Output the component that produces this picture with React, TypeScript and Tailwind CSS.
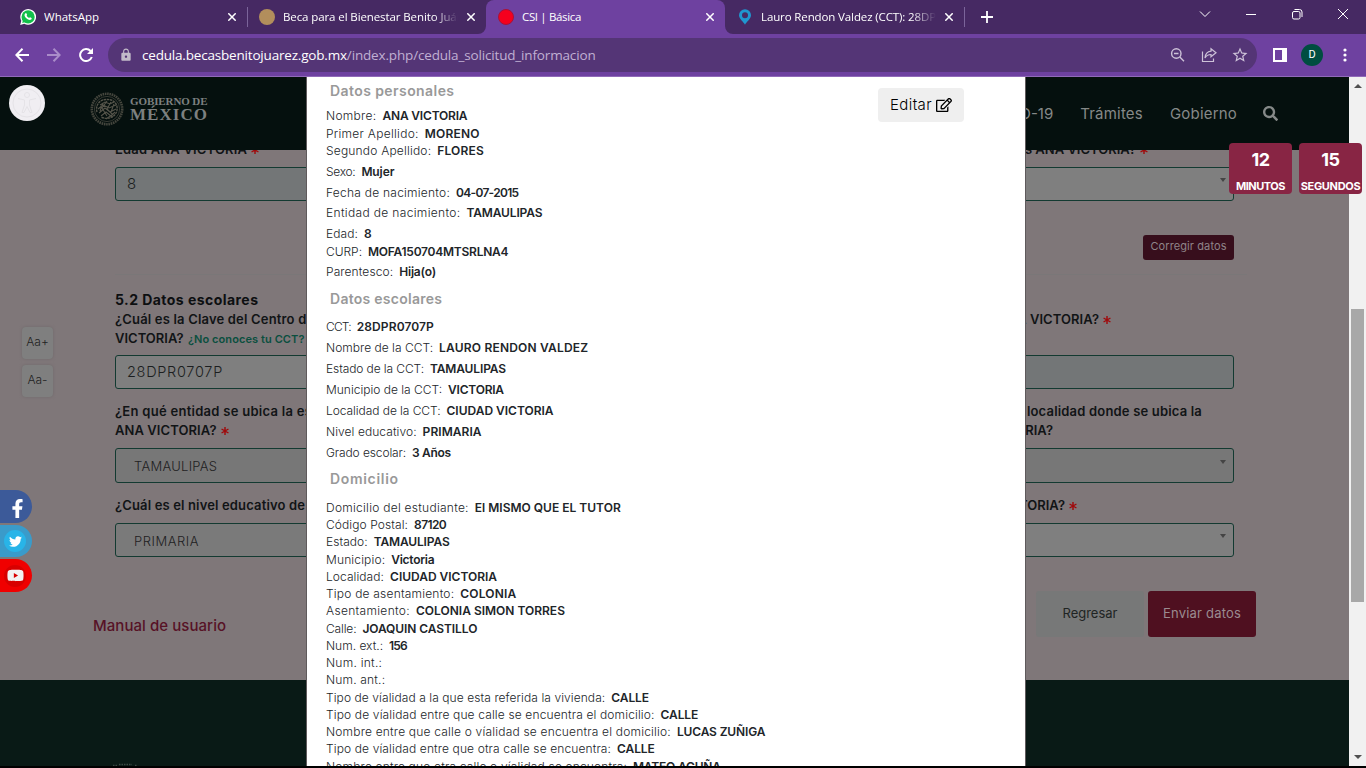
import type { ReactNode } from "react";
import { FaRegEdit, FaSearch, FaFacebookF, FaTwitter, FaYoutube } from "react-icons/fa";
import { MdLock, MdStarOutline } from "react-icons/md";

type Row = { label: string; lt: string; value?: string; vt?: string; mt?: string };

const personales: Row[] = [
  { label: "Nombre:", lt: "tracking-[0.3px]", value: "ANA VICTORIA", vt: "tracking-[-0.19px]" },
  { label: "Primer Apellido:", lt: "tracking-[0.28px]", value: "MORENO", vt: "tracking-[0.2px]", mt: "mt-[0.5px]" },
  { label: "Segundo Apellido:", lt: "tracking-[0.19px]", value: "FLORES", vt: "tracking-[0.18px]" },
  { label: "Sexo:", lt: "tracking-[-0.3px]", value: "Mujer", vt: "tracking-[-0.1px]", mt: "mt-1" },
  { label: "Fecha de nacimiento:", lt: "tracking-[0.24px]", value: "04-07-2015", vt: "tracking-[-0.71px]", mt: "mt-1" },
  { label: "Entidad de nacimiento:", lt: "tracking-[0.34px]", value: "TAMAULIPAS", vt: "tracking-[-0.14px]", mt: "mt-[3px]" },
  { label: "Edad:", lt: "tracking-[0.1px]", value: "8", mt: "mt-1" },
  { label: "CURP:", lt: "tracking-[-0.02px]", value: "MOFA150704MTSRLNA4", vt: "tracking-[-0.24px]", mt: "mt-px" },
  { label: "Parentesco:", lt: "tracking-[0.1px]", value: "Hija(o)", vt: "tracking-[-0.19px]", mt: "mt-[3px]" },
];

const escolares: Row[] = [
  { label: "CCT:", lt: "tracking-[-0.84px]", value: "28DPR0707P", vt: "tracking-[0.1px]" },
  { label: "Nombre de la CCT:", lt: "tracking-[0.02px]", value: "LAURO RENDON VALDEZ", vt: "tracking-[0.19px]" },
  { label: "Estado de la CCT:", lt: "tracking-[-0.1px]", value: "TAMAULIPAS", vt: "tracking-[-0.14px]" },
  { label: "Municipio de la CCT:", lt: "tracking-[0px]", value: "VICTORIA", vt: "tracking-[-0.22px]" },
  { label: "Localidad de la CCT:", lt: "tracking-[-0.06px]", value: "CIUDAD VICTORIA", vt: "tracking-[-0.01px]" },
  { label: "Nivel educativo:", lt: "tracking-[0.07px]", value: "PRIMARIA", vt: "tracking-[0.06px]" },
  { label: "Grado escolar:", lt: "tracking-[-0.11px]", value: "3 Años", vt: "tracking-[-0.33px]" },
];

const domicilio: Row[] = [
  { label: "Domicilio del estudiante:", lt: "tracking-[0.26px]", value: "El MISMO QUE EL TUTOR", vt: "tracking-[0.01px]" },
  { label: "Código Postal:", lt: "tracking-[0.09px]", value: "87120", vt: "tracking-[-0.6px]" },
  { label: "Estado:", lt: "tracking-[0.05px]", value: "TAMAULIPAS", vt: "tracking-[-0.14px]" },
  { label: "Municipio:", lt: "tracking-[0.14px]", value: "Victoria", vt: "tracking-[-0.25px]" },
  { label: "Localidad:", lt: "tracking-[0.07px]", value: "CIUDAD VICTORIA", vt: "tracking-[-0.01px]" },
  { label: "Tipo de asentamiento:", lt: "tracking-[0.2px]", value: "COLONIA", vt: "tracking-[0.18px]" },
  { label: "Asentamiento:", lt: "tracking-[0.32px]", value: "COLONIA SIMON TORRES", vt: "tracking-[0px]" },
  { label: "Calle:", lt: "tracking-[-0.15px]", value: "JOAQUIN CASTILLO", vt: "tracking-[-0.08px]" },
  { label: "Num. ext.:", lt: "tracking-[0px]", value: "156", vt: "tracking-[-0.8px]" },
  { label: "Num. int.:", lt: "tracking-[0.26px]" },
  { label: "Num. ant.:", lt: "tracking-[0.18px]" },
  { label: "Tipo de víalidad a la que esta referida la vivienda:", lt: "tracking-[0.08px]", value: "CALLE", vt: "tracking-[-0.1px]" },
  { label: "Tipo de víalidad entre que calle se encuentra el domicilio:", lt: "tracking-[0.14px]", value: "CALLE", vt: "tracking-[-0.1px]" },
  { label: "Nombre entre que calle o víalidad se encuentra el domicilio:", lt: "tracking-[0.19px]", value: "LUCAS ZUÑIGA", vt: "tracking-[-0.14px]" },
  { label: "Tipo de víalidad entre que otra calle se encuentra:", lt: "tracking-[0.12px]", value: "CALLE", vt: "tracking-[-0.1px]" },
  { label: "Nombre entre que otra calle o víalidad se encuentra:", lt: "tracking-[0.17px]", value: "MATEO ACUÑA", vt: "tracking-[-0.2px]" },
];

function Rows({ rows, gap, leading }: { rows: Row[]; gap?: string; leading: string }) {
  return (
    <dl className={`flex flex-col text-[12px] whitespace-nowrap ${gap ?? ""}`}>
      {rows.map((r, i) => (
        <div key={i} className={`flex gap-1.5 ${leading} ${r.mt ?? ""}`}>
          <dt className={`font-light text-[#212529] ${r.lt}`}>{r.label}</dt>
          {r.value && <dd className={`font-semibold text-[#212529] ${r.vt ?? ""}`}>{r.value}</dd>}
        </div>
      ))}
    </dl>
  );
}

function SectionTitle({ children, className }: { children: ReactNode; className: string }) {
  return <h3 className={`pl-1 text-[14px] leading-[17px] font-semibold text-[#999] ${className}`}>{children}</h3>;
}

function CloseIcon({ className = "" }: { className?: string }) {
  return (
    <svg viewBox="0 0 8 8" className={`size-2 shrink-0 ${className}`} stroke="currentColor" strokeWidth="1.5">
      <path d="M0.3 0.3 7.7 7.7M7.7 0.3 0.3 7.7" />
    </svg>
  );
}

function Tab({ icon, title, tracking, active, fade }: { icon: ReactNode; title: string; tracking: string; active?: boolean; fade?: boolean }) {
  return (
    <div className={`relative flex h-[34px] w-[239px] shrink-0 items-center pr-[11px] pl-3 text-white ${active ? "rounded-t-lg bg-[#6e41a0]" : ""}`}>
      {active && (
        <>
          <svg viewBox="0 0 8 8" className="absolute bottom-0 -left-2 size-2" fill="#6e41a0"><path d="M8 0V8H0A8 8 0 0 0 8 0" /></svg>
          <svg viewBox="0 0 8 8" className="absolute -right-2 bottom-0 size-2" fill="#6e41a0"><path d="M0 0V8H8A8 8 0 0 1 0 0" /></svg>
        </>
      )}
      <span className="mr-2 flex size-4 shrink-0 items-center justify-center">{icon}</span>
      <span className={`w-[175px] overflow-hidden text-[11.5px] whitespace-nowrap ${tracking} ${fade ? "[mask-image:linear-gradient(to_right,black_86%,transparent_100%)]" : ""}`}>{title}</span>
      <CloseIcon className="ml-auto" />
    </div>
  );
}

function BrowserBar() {
  return (
    <div className="font-['Open_Sans',sans-serif]">
      <div className="flex h-[34px] items-center bg-[#462963] text-white">
        <div className="flex w-[247px] shrink-0 pl-2">
          <Tab
            title="WhatsApp"
            tracking="tracking-[0.02px]"
            icon={
              <svg viewBox="0 0 16 16" className="size-4">
                <path d="M0.2 15.9 1.3 11.8A7.9 7.9 0 1 1 4.3 14.8Z" fill="#fff" />
                <circle cx="8.1" cy="7.9" r="6.6" fill="#12c04b" />
                <path d="M2.2 13.9 3.2 10.3 5.6 13Z" fill="#12c04b" />
                <path d="M5.6 4.2c.5-.2.8 0 1 .5l.5 1.1c.1.4-.4.8-.5 1 .5 1 1.3 1.7 2.5 2.2.4-.3.7-.9 1-.8l1.4.7c.4.3.1 1.3-.4 1.7-.8.6-1.9.5-3-.1C6.5 9.7 5.4 8.6 4.8 7.3 4.3 6.1 4.6 4.7 5.6 4.2Z" fill="#fff" />
              </svg>
            }
          />
        </div>
        <span className="h-5 w-px bg-[#7b649a]" />
        <div className="-ml-px flex">
          <Tab title="Beca para el Bienestar Benito Juárez" tracking="tracking-[-0.1px]" fade icon={<span className="size-4 rounded-full bg-[#b28e5c]" />} />
          <Tab title="CSI | Básica" tracking="tracking-[-0.35px]" active icon={<span className="size-4 rounded-full border border-[#a8123a] bg-[#f5001d]" />} />
          <Tab
            title="Lauro Rendon Valdez (CCT): 28DPR"
            tracking="tracking-[-0.12px]"
            fade
            icon={
              <svg viewBox="0 0 16 16" className="size-4">
                <path fillRule="evenodd" d="M8 0.3A6 6 0 0 1 14 6.3C14 10 9.6 12.5 8 15.8 6.4 12.5 2 10 2 6.3A6 6 0 0 1 8 0.3ZM8 3.3A3 3 0 1 0 8 9.3 3 3 0 0 0 8 3.3Z" fill="#2096cf" />
              </svg>
            }
          />
        </div>
        <span className="h-5 w-px bg-[#7b649a]" />
        <svg viewBox="0 0 12 12" className="ml-4 size-3" stroke="#fff" strokeWidth="1.8"><path d="M6 0V12M0 6H12" /></svg>
        <div className="mr-[17px] mb-1.5 ml-auto flex items-center gap-[34px]">
          <svg viewBox="0 0 12 12" className="size-3" fill="none" stroke="#fff"><path d="M1 3.5 6 8.5 11 3.5" /></svg>
          <svg viewBox="0 0 12 12" className="size-3" stroke="#fff"><path d="M1 6.5H11" /></svg>
          <svg viewBox="0 0 12 12" className="size-3" fill="none" stroke="#fff">
            <rect x="1.5" y="3.5" width="7.5" height="7.5" rx="1.5" />
            <path d="M3.5 1.5H8.5A2.5 2.5 0 0 1 11 4V9" />
          </svg>
          <svg viewBox="0 0 12 12" className="size-3" stroke="#fff"><path d="M1 1 11 11M11 1 1 11" /></svg>
        </div>
      </div>
      <div className="flex h-[42px] items-center bg-[#6e41a0] pl-[15px]">
        <svg viewBox="0 0 14 14" className="size-3.5" fill="none" stroke="#fff" strokeWidth="2"><path d="M14 7H1.5M7.5 0.8 1.3 7 7.5 13.2" /></svg>
        <svg viewBox="0 0 14 14" className="ml-[18px] size-3.5" fill="none" stroke="#aa8cc9" strokeWidth="2"><path d="M0 7H12.5M6.5 0.8 12.7 7 6.5 13.2" /></svg>
        <svg viewBox="0 0 14 14" className="ml-[18px] size-3.5">
          <path d="M12.8 9A6 6 0 1 1 11.6 3" fill="none" stroke="#fff" strokeWidth="2" />
          <path d="M14 0V6H8Z" fill="#fff" />
        </svg>
        <div className="ml-[15px] flex h-[34px] w-[1149px] items-center rounded-full bg-[#543576] pl-[11px]">
          <MdLock className="size-[14px] text-[#c2bbc9]" />
          <div className="ml-[9px] text-[13.5px] whitespace-nowrap">
            <span className="tracking-[-0.19px] text-white">cedula.becasbenitojuarez.gob.mx</span>
            <span className="tracking-[-0.16px] text-[#c0b0d3]">/index.php/cedula_solicitud_informacion</span>
          </div>
          <div className="mr-2 ml-auto flex items-center gap-4 text-[#cdc2d8]">
            <svg viewBox="0 0 16 16" className="-mr-px size-4" fill="none" stroke="currentColor" strokeWidth="1.4">
              <circle cx="6.3" cy="6.5" r="4.7" />
              <path d="M4 6.5H8.5M9.8 10 14 14.2" />
            </svg>
            <svg viewBox="0 0 16 16" className="size-4" fill="none" stroke="currentColor" strokeWidth="1.2">
              <path d="M1.5 4.5V14.5H12.5V11.5" />
              <path d="M10 1.8 15 5.8 10 9.8V7.5C7 7.5 5.3 8.6 4 11 4.3 7.5 6 4.6 10 4.2Z" />
            </svg>
            <MdStarOutline className="-ml-0.5 size-[18px]" />
          </div>
        </div>
        <svg viewBox="0 0 14 14" className="ml-4 size-3.5"><path fillRule="evenodd" d="M0 0H14V14H0ZM2 2V12H9V2Z" fill="#fff" /></svg>
        <span className="ml-3.5 flex size-[22px] items-center justify-center rounded-full bg-[#004d40] font-[Roboto] text-[11px] text-white">D</span>
        <svg viewBox="0 0 4 14" className="ml-5 h-3.5 w-1" fill="#fff"><circle cx="2" cy="2" r="1.6" /><circle cx="2" cy="7" r="1.6" /><circle cx="2" cy="12" r="1.6" /></svg>
      </div>
      <div className="h-px bg-[#906ab8]" />
    </div>
  );
}

function Star() {
  return (
    <svg viewBox="0 0 10 10" className="ml-1 inline-block size-2" stroke="#a00a0c" strokeWidth="1.8"><path d="M5 0V10M0.7 2.5 9.3 7.5M9.3 2.5 0.7 7.5" /></svg>
  );
}

function Field({ children, arrow, className = "" }: { children?: ReactNode; arrow?: boolean; className?: string }) {
  return (
    <div className={`flex w-[360px] items-center rounded-[3px] border border-[#133a31] whitespace-nowrap ${className}`}>
      {children}
      {arrow && <svg viewBox="0 0 6 4" className="mr-[7px] mb-2 ml-auto h-1 w-1.5" fill="#444"><path d="M0 0H6L3 4Z" /></svg>}
    </div>
  );
}

function Label({ children, className = "" }: { children: ReactNode; className?: string }) {
  return <p className={`text-[13px] leading-[19px] font-semibold whitespace-nowrap text-[#111416] ${className}`}>{children}</p>;
}

function Emblem() {
  return (
    <svg viewBox="0 0 34 34" className="size-[34px]" fill="none" stroke="#55544a">
      <circle cx="17" cy="17" r="15.2" strokeWidth="2.6" strokeDasharray="1.6 0.7" opacity="0.8" />
      <circle cx="17" cy="17" r="12.6" strokeWidth="0.6" />
      <path d="M7 20C5 13 10 7 17 7.5 24 7 29 13 26.5 20 24 26 17 28 11 25" strokeWidth="1.4" strokeDasharray="2.5 0.6" />
      <path d="M10 13 15 10 20 12 24 10M8 17 13 13 19 16 26 13M9 21 15 16 20 20 26 17M11 24 16 20 21 24 25 20M16 27 20 24 23 25M17 9 12 16 17 24M21 10 17 17 23 23M13 11 10 19M24 12 21 20" strokeWidth="1.1" />
    </svg>
  );
}

function PageBehind() {
  return (
    <div className="flex h-full w-[1349px] flex-col bg-[#7f7779]">
      <header className="flex h-[73px] shrink-0 items-center bg-[#05100e] pl-[90px]">
        <div className="mb-[9px] flex items-center gap-1.5">
          <Emblem />
          <div className="font-['Liberation_Serif',serif] font-bold text-[#7d8080]">
            <div className="text-[11px] leading-[12px] tracking-[-0.1px]">GOBIERNO DE</div>
            <div className="text-[17px] leading-[16px] tracking-[1.04px]">MÉXICO</div>
          </div>
        </div>
        <nav className="mt-0.5 mr-[71px] ml-auto flex items-center text-[15px] text-[#858988]">
          <span className="mr-[27px]">COVID-19</span>
          <span className="mr-[27px] tracking-[0.2px]">Trámites</span>
          <span className="mr-[26px] tracking-[0.2px]">Gobierno</span>
          <FaSearch className="mb-0.5 size-[15px]" />
        </nav>
      </header>
      <main className="h-[530px] shrink-0 overflow-hidden px-[115px]">
        <div className="-mt-[10px] flex justify-between">
          <Label className="tracking-[0.17px]">Edad ANA VICTORIA<Star /></Label>
          <Label className="pr-[86px]">s ANA VICTORIA?<Star /></Label>
        </div>
        <div className="mt-2 flex justify-between">
          <Field className="h-[34px] bg-[#737677] pl-[11px] text-[15px] font-light text-[#1b1e20]">8</Field>
          <Field arrow className="h-[34px] bg-[#7f7f7f]" />
        </div>
        <div className="mt-[34px] flex justify-end">
          <div className="h-[25px] w-[91px] rounded-[3px] bg-[#370e1c] text-center text-[11px] leading-[23px] tracking-[0.1px] text-[#8f8489]">Corregir datos</div>
        </div>
        <div className="mt-[14px] -mr-[13px] h-px bg-[#7a7778]" />
        <h2 className="mt-[15px] text-[14px] leading-5 font-bold tracking-[0.45px] text-[#0d0f11]">5.2 Datos escolares</h2>
        <div className="flex justify-between">
          <div className="w-[360px]">
            <Label className="tracking-[0.18px]">¿Cuál es la Clave del Centro de</Label>
            <Label>VICTORIA? <span className="ml-px text-[11px] tracking-[0.09px] text-[#0b4f3f]">¿No conoces tu CCT?</span></Label>
          </div>
          <Label className="pr-[123px] tracking-[0.05px]">ANA VICTORIA?<Star /></Label>
        </div>
        <div className="mt-1.5 flex justify-between">
          <Field className="h-[34px] bg-[#7f7f7f] pl-[11px] text-[14.5px] font-light tracking-[0.7px] text-[#1b1e20]">28DPR0707P</Field>
          <Field className="h-[34px] bg-[#737677]" />
        </div>
        <div className="mt-[13px] flex justify-between">
          <div>
            <Label className="tracking-[0.28px]">¿En qué entidad se ubica la es</Label>
            <Label className="tracking-[0.07px]">ANA VICTORIA?<Star /></Label>
          </div>
          <div className="text-right">
            <Label className="pr-8 tracking-[0.18px]">localidad donde se ubica la</Label>
            <Label className="pr-[181px]">VICTORIA?</Label>
          </div>
        </div>
        <div className="mt-2 flex justify-between">
          <Field className="h-[35px] bg-[#777777] pt-[3px] pl-[18px] text-[13px] font-light tracking-[0.27px] text-[#1f2122]">TAMAULIPAS</Field>
          <Field arrow className="h-[35px] bg-[#777777]" />
        </div>
        <div className="mt-[13px] flex justify-between">
          <Label className="tracking-[0.15px]">¿Cuál es el nivel educativo de</Label>
          <Label className="pr-[157px]">VICTORIA?<Star /></Label>
        </div>
        <div className="mt-2 flex justify-between">
          <Field className="h-[34px] bg-[#7a7a7a] pt-1 pl-[18px] text-[13px] font-light tracking-[0.55px] text-[#1f2122]">PRIMARIA</Field>
          <Field arrow className="h-[34px] bg-[#7f7f7f]" />
        </div>
        <div className="-mx-[22px] mt-[34px] flex h-[46px] items-center">
          <span className="mt-6 text-[15px] font-medium tracking-[0.06px] text-[#571226]">Manual de usuario</span>
          <div className="mr-1 ml-auto flex h-[46px] w-[108px] items-center justify-center rounded-[3px] bg-[#777878] text-[13px] text-[#202423]">Regresar</div>
          <div className="flex h-[46px] w-[108px] items-center justify-center rounded-[3px] bg-[#4f1020] text-[13px] tracking-[0.21px] text-[#9b8b90]">Enviar datos</div>
        </div>
      </main>
      <footer className="flex flex-1 items-end bg-[#091a16] pl-[113px]">
        <svg viewBox="0 0 24 3" className="h-[3px] w-6" fill="none" stroke="#3c4843"><path d="M0 2.5H5M6 1.5H19M22 2.5H24" strokeWidth="1.5" strokeDasharray="1.5 1" /></svg>
      </footer>
    </div>
  );
}

function ConfirmDialog() {
  return (
    <section className="absolute top-0 left-[307px] flex h-full w-[718px] items-start justify-between overflow-hidden bg-white pr-[61px] pl-[19px] shadow-[0_0_0_1px_#5f5a5c]">
      <div>
        <SectionTitle className="mt-[5px] tracking-[0.42px]">Datos personales</SectionTitle>
        <div className="mt-2"><Rows rows={personales} leading="leading-[17px]" /></div>
        <SectionTitle className="mt-[10px] tracking-[0.27px]">Datos escolares</SectionTitle>
        <div className="mt-[11px]"><Rows rows={escolares} gap="gap-1" leading="leading-[17px]" /></div>
        <SectionTitle className="mt-[9px] tracking-[0.68px]">Domicilio</SectionTitle>
        <div className="mt-[12.3px]"><Rows rows={domicilio} leading="leading-[17.25px]" /></div>
      </div>
      <button className="mt-[11px] flex h-[34px] w-[86px] items-center justify-center gap-1 rounded-[4px] bg-[#efefef] text-[15px] font-light tracking-[0.4px] text-black">
        Editar <FaRegEdit className="mb-px size-4" />
      </button>
    </section>
  );
}

function Counter({ value, unit, tracking }: { value: string; unit: string; tracking: string }) {
  return (
    <div className="flex h-[51px] w-[63px] flex-col items-center rounded-[4px] bg-[#882544] font-bold text-white">
      <span className="mt-1.5 text-[18px] leading-[22px] tracking-[-0.5px]">{value}</span>
      <span className={`mt-2 text-[11px] leading-[14px] ${tracking}`}>{unit}</span>
    </div>
  );
}

export default function App() {
  return (
    <div className="flex h-[768px] w-[1366px] flex-col overflow-hidden bg-black font-[Inter,sans-serif]">
      <BrowserBar />
      <div className="relative flex h-[689px] shrink-0 overflow-hidden">
        <PageBehind />
        <div className="flex w-[17px] flex-col items-center bg-[#f1f1f1]">
          <svg viewBox="0 0 8 4" className="mt-[7px] h-1 w-2" fill="#505050"><path d="M0 4H8L4 0Z" /></svg>
          <div className="mt-[221px] h-[293px] w-[13px] bg-[#a8a8a8]" />
          <svg viewBox="0 0 8 4" className="mt-auto mb-[7px] h-1 w-2" fill="#505050"><path d="M0 0H8L4 4Z" /></svg>
        </div>

        <ConfirmDialog />

        <div className="absolute top-[7.5px] left-[9px] flex size-9 items-center justify-center rounded-full bg-[#f0eef2]">
          <svg viewBox="0 0 32 32" className="size-8" fill="none" stroke="#e5e3e7">
            <circle cx="16" cy="16" r="14" />
            <circle cx="16" cy="8" r="2.5" />
            <path d="M7 11.5 13.5 13V18L11 25.5H13L16 19.5 19 25.5H21L18.5 18V13L25 11.5" />
          </svg>
        </div>

        <div className="absolute top-[250px] left-[22px] flex flex-col gap-1.5 text-[12px] font-light text-[#222]">
          <span className="flex h-8 w-[31px] items-center justify-center rounded-[4px] bg-[#7f7f7f] pb-0.5 shadow-[0_0_3px_#6f696b]">Aa+</span>
          <span className="flex h-8 w-[31px] items-center justify-center rounded-[4px] bg-[#7f7f7f] pb-0.5 shadow-[0_0_3px_#6f696b]">Aa-</span>
        </div>

        <div className="absolute top-[413px] left-0 flex w-8 flex-col gap-0.5 text-white">
          <span className="flex h-[33px] items-center rounded-r-full bg-[#3c5a99] pl-2"><FaFacebookF className="mt-1 size-[19px]" /></span>
          <span className="flex h-8 items-center rounded-r-full bg-[#3a9bca] pl-1">
            <span className="flex size-[22px] items-center justify-center rounded-full bg-[#28b4e8]"><FaTwitter className="size-[13px]" /></span>
          </span>
          <span className="flex h-[33px] items-center rounded-r-full bg-[#f00000] pl-1">
            <span className="flex size-[22px] items-center justify-center rounded-full bg-[#d80000]"><FaYoutube className="size-[17px] text-[#f2f2f2]" /></span>
          </span>
        </div>

        <div className="absolute top-[66px] right-1 flex gap-[7px]">
          <Counter value="12" unit="MINUTOS" tracking="tracking-[-0.5px]" />
          <Counter value="15" unit="SEGUNDOS" tracking="tracking-[-0.31px]" />
        </div>
      </div>
    </div>
  );
}
